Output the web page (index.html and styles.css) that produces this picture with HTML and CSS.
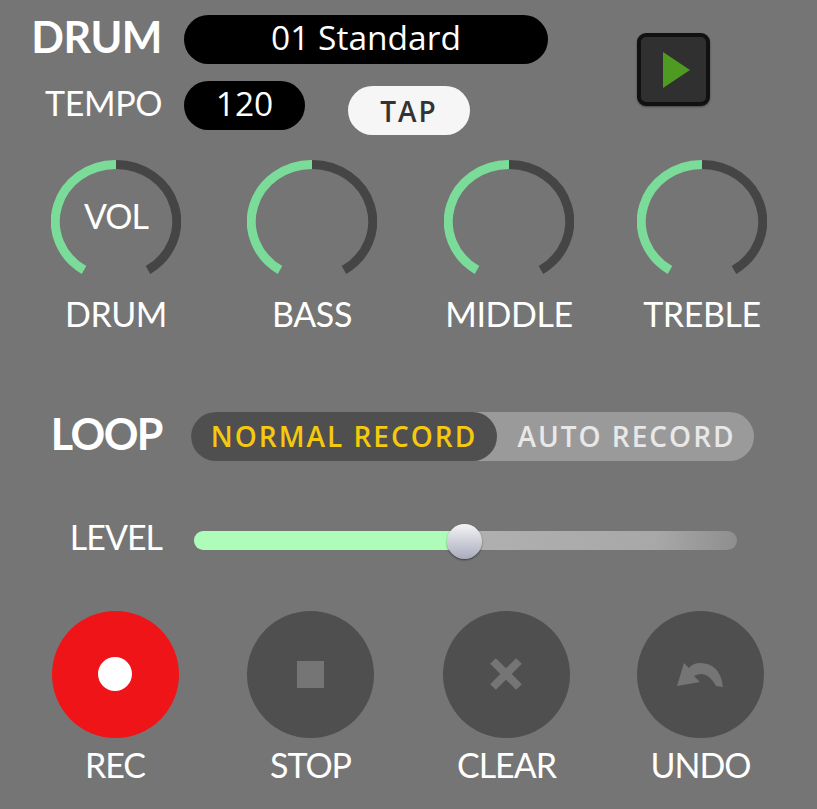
FILE: index.html
```html
<!DOCTYPE html>
<html lang="en">
<head>
  <meta charset="UTF-8">
  <title>Drum Loop</title>
  <link rel="stylesheet" href="styles.css">
</head>
<body>
  <!-- Drum header -->
  <header class="head">
    <div class="head-left">
      <div class="row">
        <span class="title">DRUM</span>
        <div class="pill pill-name">01 Standard</div>
      </div>
      <div class="row row-tempo">
        <span class="label">TEMPO</span>
        <div class="pill pill-tempo">120</div>
        <button class="tap">TAP</button>
      </div>
    </div>
    <button class="play">
      <svg width="30" height="38" viewBox="0 0 30 38"><path d="M1 1 L28 19 L1 37 Z" fill="#4f9a20"/></svg>
    </button>
  </header>

  <!-- Knobs -->
  <section class="cols knobs">
    <div class="col">
      <div class="knob">
        <svg width="130" height="130" viewBox="0 0 130 130">
          <path class="arc-off" d="M65 4.5 A60.5 57 0 0 1 97 110"/>
          <path class="arc-on" d="M65 4.5 A60.5 57 0 0 0 33 110"/>
        </svg>
        <span class="knob-text">VOL</span>
      </div>
      <span class="label">DRUM</span>
    </div>
    <div class="col">
      <div class="knob">
        <svg width="130" height="130" viewBox="0 0 130 130">
          <path class="arc-off" d="M65 4.5 A60.5 57 0 0 1 97 110"/>
          <path class="arc-on" d="M65 4.5 A60.5 57 0 0 0 33 110"/>
        </svg>
      </div>
      <span class="label">BASS</span>
    </div>
    <div class="col">
      <div class="knob">
        <svg width="130" height="130" viewBox="0 0 130 130">
          <path class="arc-off" d="M65 4.5 A60.5 57 0 0 1 97 110"/>
          <path class="arc-on" d="M65 4.5 A60.5 57 0 0 0 33 110"/>
        </svg>
      </div>
      <span class="label">MIDDLE</span>
    </div>
    <div class="col">
      <div class="knob">
        <svg width="130" height="130" viewBox="0 0 130 130">
          <path class="arc-off" d="M65 4.5 A60.5 57 0 0 1 97 110"/>
          <path class="arc-on" d="M65 4.5 A60.5 57 0 0 0 33 110"/>
        </svg>
      </div>
      <span class="label">TREBLE</span>
    </div>
  </section>

  <!-- Loop mode -->
  <section class="row loop">
    <span class="title title-loop">LOOP</span>
    <div class="toggle">
      <span class="toggle-on">NORMAL RECORD</span>
      <span class="toggle-off">AUTO RECORD</span>
    </div>
  </section>

  <!-- Level slider -->
  <section class="row level">
    <span class="label">LEVEL</span>
    <div class="track">
      <div class="fill"></div>
      <div class="thumb"></div>
    </div>
  </section>

  <!-- Transport -->
  <section class="cols transport">
    <div class="col">
      <button class="round round-rec">
        <svg width="127" height="127" viewBox="0 0 127 127"><circle cx="63" cy="63" r="17" fill="#fff"/></svg>
      </button>
      <span class="label">REC</span>
    </div>
    <div class="col">
      <button class="round">
        <svg width="127" height="127" viewBox="0 0 127 127"><rect x="50" y="50" width="27" height="27" fill="#757575"/></svg>
      </button>
      <span class="label">STOP</span>
    </div>
    <div class="col">
      <button class="round">
        <svg width="127" height="127" viewBox="0 0 127 127"><path d="M50 50 L76 76 M76 50 L50 76" stroke="#757575" stroke-width="8" fill="none"/></svg>
      </button>
      <span class="label">CLEAR</span>
    </div>
    <div class="col">
      <button class="round">
        <svg width="127" height="127" viewBox="0 0 127 127"><path d="M47 52 L40 75 L63 71 L57 65 Q70 58 79 75 L86 76 Q83 52 63 52 Q56 52 52 57 Z" fill="#757575"/></svg>
      </button>
      <span class="label">UNDO</span>
    </div>
  </section>
</body>
</html>
```

FILE: styles.css
```css
* {
  margin: 0;
  padding: 0;
  box-sizing: border-box;
}

body {
  width: 817px;
  height: 809px;
  overflow: hidden;
  background-color: #757575;
  color: #fff;
  font-family: Lato, "Open Sans", sans-serif;
}

button {
  border: none;
  font-family: inherit;
}

.row {
  display: flex;
  align-items: center;
}

.title {
  width: 162px;
  margin-bottom: 6px;
  text-align: right;
  font-size: 43px;
  font-weight: 700;
  letter-spacing: -0.5px;
  line-height: 43px;
}

.title-loop {
  letter-spacing: -1.5px;
}

.label {
  font-size: 34px;
  line-height: 40px;
  letter-spacing: -0.4px;
}

/* Header */
.head {
  display: flex;
  padding-top: 15px;
}

.head-left {
  width: 637px;
}

.pill {
  height: 49px;
  margin-left: 22px;
  border-radius: 25px;
  background-color: #000;
  text-align: center;
  font-family: "Open Sans", sans-serif;
  font-size: 33.5px;
  line-height: 45px;
}

.pill-name {
  width: 364px;
}

.pill-tempo {
  width: 121px;
}

.row-tempo {
  align-items: flex-start;
  margin-top: 17px;
}

.row-tempo .label {
  width: 162px;
  margin-top: 2px;
  text-align: right;
}

.tap {
  width: 122px;
  height: 49px;
  margin: 5px 0 0 43px;
  border-radius: 25px;
  background-color: #f6f6f6;
  color: #333;
  font-family: "Open Sans", sans-serif;
  font-size: 28px;
  font-weight: 600;
  letter-spacing: 2px;
}

.play {
  display: flex;
  align-items: center;
  justify-content: center;
  width: 73px;
  height: 73px;
  margin-top: 18px;
  padding-left: 6px;
  border: 4px solid #111;
  border-radius: 9px;
  background-color: #303030;
  box-shadow: 0 1px 2px rgba(0, 0, 0, 0.4);
}

/* Four column rows */
.cols {
  display: grid;
}

.col {
  display: flex;
  flex-direction: column;
  align-items: center;
}

/* Knobs */
.knobs {
  grid-template-columns: 196px 196px 198px 188px;
  margin-top: 25px;
  padding-left: 18px;
}

.knob {
  position: relative;
  width: 130px;
  height: 130px;
  margin-bottom: 4px;
}

.knob svg {
  display: block;
}

.arc-on,
.arc-off {
  fill: none;
  stroke-width: 9;
}

.arc-on {
  stroke: #7bdc9a;
}

.arc-off {
  stroke: #454545;
}

.knob-text {
  position: absolute;
  top: 35px;
  left: 0;
  width: 100%;
  text-align: center;
  font-size: 34px;
  letter-spacing: -1px;
}

/* Loop toggle */
.loop {
  margin-top: 78px;
}

.toggle {
  display: flex;
  width: 563px;
  height: 49px;
  margin-left: 29px;
  border-radius: 25px;
  background-color: #9a9a9a;
  font-family: "Open Sans", sans-serif;
  font-size: 28px;
  font-weight: 600;
  letter-spacing: 2px;
  line-height: 48px;
}

.toggle-on {
  width: 306px;
  border-radius: 25px;
  background-color: #4f4f4f;
  color: #f5c90e;
  text-align: center;
}

.toggle-off {
  flex: 1;
  padding-left: 2px;
  color: #e8e8e8;
  text-align: center;
}

/* Level slider */
.level {
  height: 36px;
  margin-top: 62px;
}

.level .label {
  width: 162px;
  margin-bottom: 8px;
  text-align: right;
  letter-spacing: -1px;
}

.track {
  position: relative;
  width: 543px;
  height: 19px;
  margin: 0 0 2px 32px;
  border-radius: 10px;
  background: linear-gradient(to right, #a0a0a0, #b0b0b0 50%, #a8a8a8 85%, #8e8e8e);
}

.fill {
  width: 270px;
  height: 100%;
  border-radius: 10px 0 0 10px;
  background-color: #aefcb9;
}

.thumb {
  position: absolute;
  top: -7px;
  left: 253px;
  width: 35px;
  height: 35px;
  border-radius: 50%;
  background: linear-gradient(to bottom, #f4f4f6, #a9abbd);
  box-shadow: 0 1px 2px rgba(0, 0, 0, 0.5);
}

/* Transport buttons */
.transport {
  grid-template-columns: 196px 195px 197px 191px;
  margin-top: 52px;
  padding-left: 17px;
}

.transport .label {
  letter-spacing: -1px;
}

.round {
  width: 127px;
  height: 127px;
  margin-bottom: 7px;
  border-radius: 50%;
  background-color: #4f4f4f;
}

.round svg {
  display: block;
}

.round-rec {
  background-color: #ee1418;
}
```
